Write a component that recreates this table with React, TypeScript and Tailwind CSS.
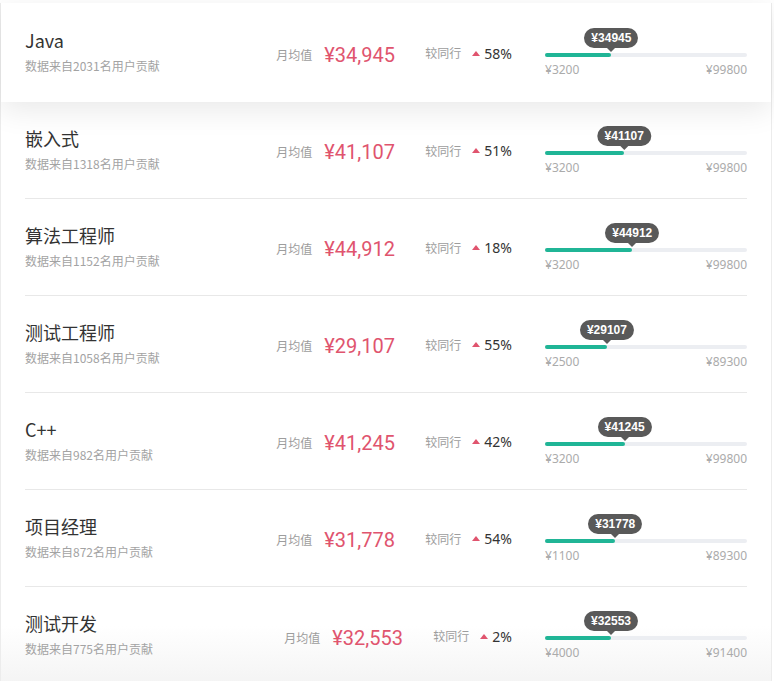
import React from 'react';

type Job = {
  title: string;
  users: number;
  avg: number;
  pct: number;
  min: number;
  max: number;
  shift?: boolean;
};

const jobs: Job[] = [
  { title: 'Java', users: 2031, avg: 34945, pct: 58, min: 3200, max: 99800 },
  { title: '嵌入式', users: 1318, avg: 41107, pct: 51, min: 3200, max: 99800 },
  { title: '算法工程师', users: 1152, avg: 44912, pct: 18, min: 3200, max: 99800 },
  { title: '测试工程师', users: 1058, avg: 29107, pct: 55, min: 2500, max: 89300 },
  { title: 'C++', users: 982, avg: 41245, pct: 42, min: 3200, max: 99800 },
  { title: '项目经理', users: 872, avg: 31778, pct: 54, min: 1100, max: 89300 },
  { title: '测试开发', users: 775, avg: 32553, pct: 2, min: 4000, max: 91400, shift: true },
];

const font = { fontFamily: '"Noto Sans CJK SC", "Noto Sans", sans-serif' };

const Row: React.FC<{ job: Job; active?: boolean; last?: boolean }> = ({ job, active, last }) => {
  const ratio = (job.avg - job.min) / (job.max - job.min);
  return (
    <div
      className={
        active
          ? 'mt-[3px] h-[99px] bg-white px-[24px] shadow-[0_8px_28px_rgba(0,0,0,0.09)] relative z-10'
          : last
            ? 'h-[97px] px-[24px] bg-gradient-to-b from-white from-40% to-[#f4f4f4]'
            : 'h-[97px] px-[24px]'
      }
    >
      <div
        className={
          'flex h-full items-center ' + (active || last ? '' : 'border-b border-[#e8e8e8]')
        }
      >
        <div className="flex-1 min-w-0 pb-[2px]">
          <div className="text-[18px] leading-[22px] text-[#333]">{job.title}</div>
          <div className="mt-[7px] text-[12px] leading-[16px] text-[#a3a3a3]">
            数据来自{job.users}名用户贡献
          </div>
        </div>

        <div className="flex items-center justify-end pt-[4px]">
          <span className="text-[12px] text-[#9d9d9d]">月均值</span>
          <span
            className="ml-[12px] text-[20px] leading-[22px] text-[#e0546e]"
            style={{ fontFamily: 'Roboto, "Noto Sans", sans-serif' }}
          >
            ¥{job.avg.toLocaleString('en-US')}
          </span>
        </div>

        <div className={'flex items-center justify-end pt-[1px] ' + (job.shift ? 'w-[109px]' : 'w-[117px]')}>
          <span className="text-[12px] text-[#9d9d9d]">较同行</span>
          <span className="ml-[11px] mr-[4px] h-0 w-0 border-x-[4px] border-b-[5px] border-x-transparent border-b-[#e0546e]" />
          <span className="text-[14px] text-[#333]" style={{ fontFamily: '"Noto Sans", sans-serif' }}>
            {job.pct}%
          </span>
        </div>

        <div className="relative ml-[33px] w-[202px] pt-[25px]">
          <div
            className="absolute top-0 -translate-x-1/2 flex flex-col items-center"
            style={{ left: `${ratio * 100}%` }}
          >
            <div
              className="h-[20px] rounded-full bg-[#595959] px-[7px] text-[12px] font-bold leading-[20px] text-white"
              style={{ fontFamily: '"Liberation Sans", Arial, sans-serif' }}
            >
              ¥{job.avg}
            </div>
            <div className="h-0 w-0 border-x-[4px] border-t-[4px] border-x-transparent border-t-[#595959]" />
          </div>
          <div className="h-[4px] rounded-full bg-[#eceef2]">
            <div className="h-full rounded-full bg-[#20b596]" style={{ width: `${ratio * 100}%` }} />
          </div>
          <div
            className="mt-[6px] flex justify-between text-[12px] leading-[14px] text-[#ababab]"
            style={{ fontFamily: '"Noto Sans", sans-serif' }}
          >
            <span>¥{job.min}</span>
            <span>¥{job.max}</span>
          </div>
        </div>
      </div>
    </div>
  );
};

export default function App() {
  return (
    <div className="h-[681px] w-[774px] overflow-hidden bg-white" style={font}>
      <div className="h-full w-[772px] border-x border-[#ececec] bg-white">
        {jobs.map((j, i) => (
          <Row key={j.title} job={j} active={i === 0} last={i === jobs.length - 1} />
        ))}
      </div>
    </div>
  );
}
